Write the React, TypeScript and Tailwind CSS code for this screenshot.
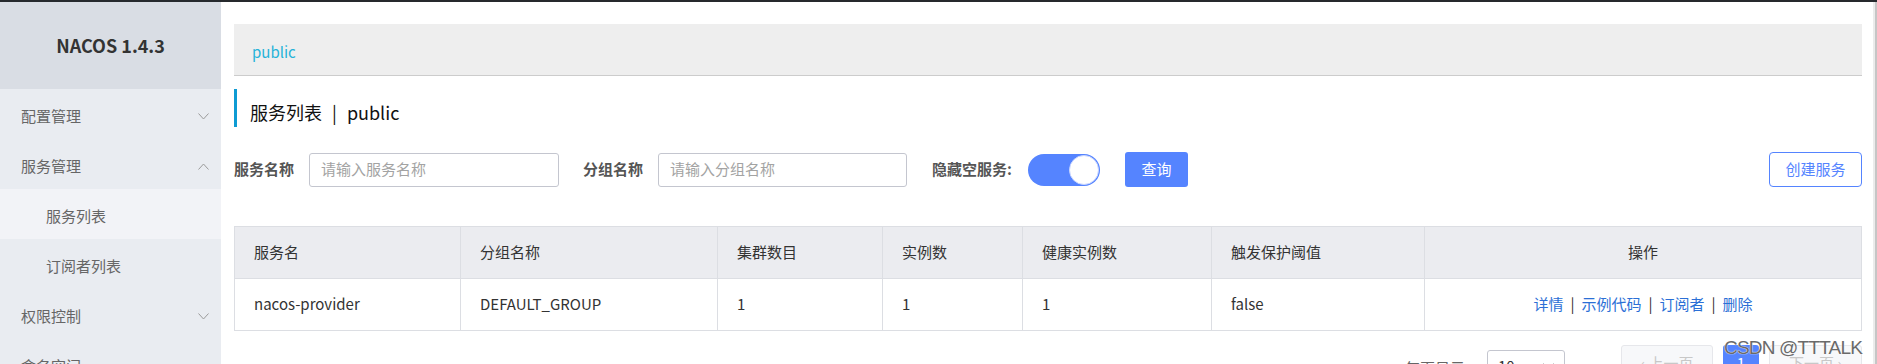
import React from "react";

const font = { fontFamily: '"Noto Sans CJK SC", "Noto Sans", sans-serif' };

const columns = [
  { title: "服务名", w: "w-[226px]" },
  { title: "分组名称", w: "w-[257px]" },
  { title: "集群数目", w: "w-[165px]" },
  { title: "实例数", w: "w-[140px]" },
  { title: "健康实例数", w: "w-[189px]" },
  { title: "触发保护阈值", w: "w-[213px]" },
  { title: "操作", w: "" },
];

const row = ["nacos-provider", "DEFAULT_GROUP", "1", "1", "1", "false"];

function Chevron({ up }: { up?: boolean }) {
  return (
    <svg width="11" height="7" viewBox="0 0 11 7" className="shrink-0">
      <polyline
        points={up ? "0.5,6.5 5.5,1 10.5,6.5" : "0.5,0.5 5.5,6 10.5,0.5"}
        fill="none"
        stroke="#9a9a9a"
        strokeWidth="1"
      />
    </svg>
  );
}

function MenuItem({ label, chevron }: { label: string; chevron?: "up" | "down" }) {
  return (
    <div className="h-[50px] shrink-0 flex items-center justify-between pl-[21px] pr-[12px] pt-[4px] text-[15px] text-[#666]">
      <span>{label}</span>
      {chevron && <Chevron up={chevron === "up"} />}
    </div>
  );
}

function Sidebar() {
  return (
    <aside className="w-[221px] shrink-0 bg-[#e9ecf1] flex flex-col overflow-hidden">
      <div className="h-[87px] shrink-0 bg-[#d9dde4] flex items-center justify-center pb-[1px]">
        <span className="text-[18px] font-bold text-[#333]">NACOS 1.4.3</span>
      </div>
      <MenuItem label="配置管理" chevron="down" />
      <MenuItem label="服务管理" chevron="up" />
      <div className="h-[50px] shrink-0 flex items-center pl-[46px] pt-[4px] text-[15px] text-[#666] bg-[#f2f3f7]">
        服务列表
      </div>
      <div className="h-[50px] shrink-0 flex items-center pl-[46px] pt-[4px] text-[15px] text-[#666]">
        订阅者列表
      </div>
      <MenuItem label="权限控制" chevron="down" />
      <MenuItem label="命名空间" />
    </aside>
  );
}

function Field({ label, placeholder, w }: { label: string; placeholder: string; w: string }) {
  return (
    <div className="flex items-center">
      <span className="text-[15px] font-bold text-[#555] mr-[15px]">{label}</span>
      <div
        className={`${w} h-[34px] border border-[#c4c6cf] rounded-[3px] flex items-center pl-[11px] text-[15px] text-[#a3a3a3]`}
      >
        {placeholder}
      </div>
    </div>
  );
}

export default function App() {
  return (
    <div className="w-[1877px] h-[364px] overflow-hidden flex flex-col bg-white" style={font}>
      <div className="h-[2px] bg-[#26292d] shrink-0" />
      <div className="flex flex-1 min-h-0">
        <Sidebar />
        <main className="flex-1 pl-[13px] pr-[11px] pt-[22px] relative">
          <div className="h-[52px] bg-[#eeeeee] border-b border-[#cccccc] flex items-center pl-[18px] pt-[5px] text-[15px] text-[#26b3d9]">
            public
          </div>

          <div className="mt-[13px] h-[38px] border-l-[3px] border-[#0e9bd3] flex items-center pl-[13px] pt-[8px] text-[18px] text-[#111]">
            <span>服务列表</span>
            <span className="mx-[10px]">|</span>
            <span>public</span>
          </div>

          <div className="mt-[25px] h-[35px] flex items-center">
            <Field label="服务名称" placeholder="请输入服务名称" w="w-[250px]" />
            <div className="ml-[24px]">
              <Field label="分组名称" placeholder="请输入分组名称" w="w-[249px]" />
            </div>
            <span className="ml-[25px] text-[15px] font-bold text-[#555]">隐藏空服务:</span>
            <div className="ml-[16px] w-[72px] h-[32px] rounded-full bg-[#5584ff] flex items-center justify-end pr-[1px]">
              <div className="w-[30px] h-[30px] rounded-full bg-white border border-[#c9d6ff]" />
            </div>
            <button className="ml-[25px] w-[63px] h-[35px] rounded-[3px] bg-[#5584ff] text-white text-[15px]">
              查询
            </button>
            <button className="ml-auto w-[93px] h-[35px] rounded-[4px] border border-[#5584ff] text-[#5584ff] text-[15px] bg-white">
              创建服务
            </button>
          </div>

          <table className="mt-[39px] w-full table-fixed border-collapse text-[15px] text-[#333]">
            <colgroup>
              {columns.map((c) => (
                <col key={c.title} className={c.w} />
              ))}
            </colgroup>
            <thead>
              <tr className="h-[52px] bg-[#ebecf0]">
                {columns.map((c, i) => (
                  <th
                    key={c.title}
                    className={`border border-[#dcdee3] px-[19px] font-normal ${
                      i === columns.length - 1 ? "text-center" : "text-left"
                    }`}
                  >
                    {c.title}
                  </th>
                ))}
              </tr>
            </thead>
            <tbody>
              <tr className="h-[52px]">
                {row.map((v, i) => (
                  <td key={i} className="border border-[#dcdee3] px-[19px]">
                    {v}
                  </td>
                ))}
                <td className="border border-[#dcdee3] text-center">
                  <span className="text-[#2b6fd6]">详情</span>
                  <span className="mx-[7px] text-[#333]">|</span>
                  <span className="text-[#2b6fd6]">示例代码</span>
                  <span className="mx-[7px] text-[#333]">|</span>
                  <span className="text-[#2b6fd6]">订阅者</span>
                  <span className="mx-[7px] text-[#333]">|</span>
                  <span className="text-[#2b6fd6]">删除</span>
                </td>
              </tr>
            </tbody>
          </table>

          <div className="mt-[14px] flex items-start justify-end text-[15px]">
            <span className="mt-[12px] text-[#666]">每页显示</span>
            <div className="ml-[22px] mt-[5px] w-[78px] h-[32px] border border-[#c4c6cf] rounded-[3px] flex items-center justify-between px-[10px] text-[#333]">
              <span>10</span>
              <Chevron />
            </div>
            <div className="ml-[56px] w-[92px] h-[36px] border border-[#e6e7eb] bg-[#f7f8fa] rounded-[3px] flex items-center justify-center text-[#c8c8c8]">
              ‹ 上一页
            </div>
            <div className="ml-[10px] w-[36px] h-[36px] bg-[#5584ff] rounded-[3px] flex items-center justify-center text-white">
              1
            </div>
            <div className="ml-[10px] w-[93px] h-[36px] border border-[#e6e7eb] bg-[#f7f8fa] rounded-[3px] flex items-center justify-center text-[#c8c8c8]">
              下一页 ›
            </div>
          </div>

          <div
            className="absolute left-[1503px] top-[336px] whitespace-nowrap text-[19px] tracking-[-0.8px] text-[#6a6a6a] leading-[20px]"
            style={{ fontFamily: '"Liberation Sans", Arial, sans-serif', textShadow: "0 0 1px #fff, 0 0 1px #fff" }}
          >
            CSDN @TTTALK
          </div>
        </main>
        <div className="w-[4px] shrink-0 flex">
          <div className="w-[2px] bg-[#ececec]" />
          <div className="w-[2px] bg-[#c6c6c6]" />
        </div>
      </div>
    </div>
  );
}
